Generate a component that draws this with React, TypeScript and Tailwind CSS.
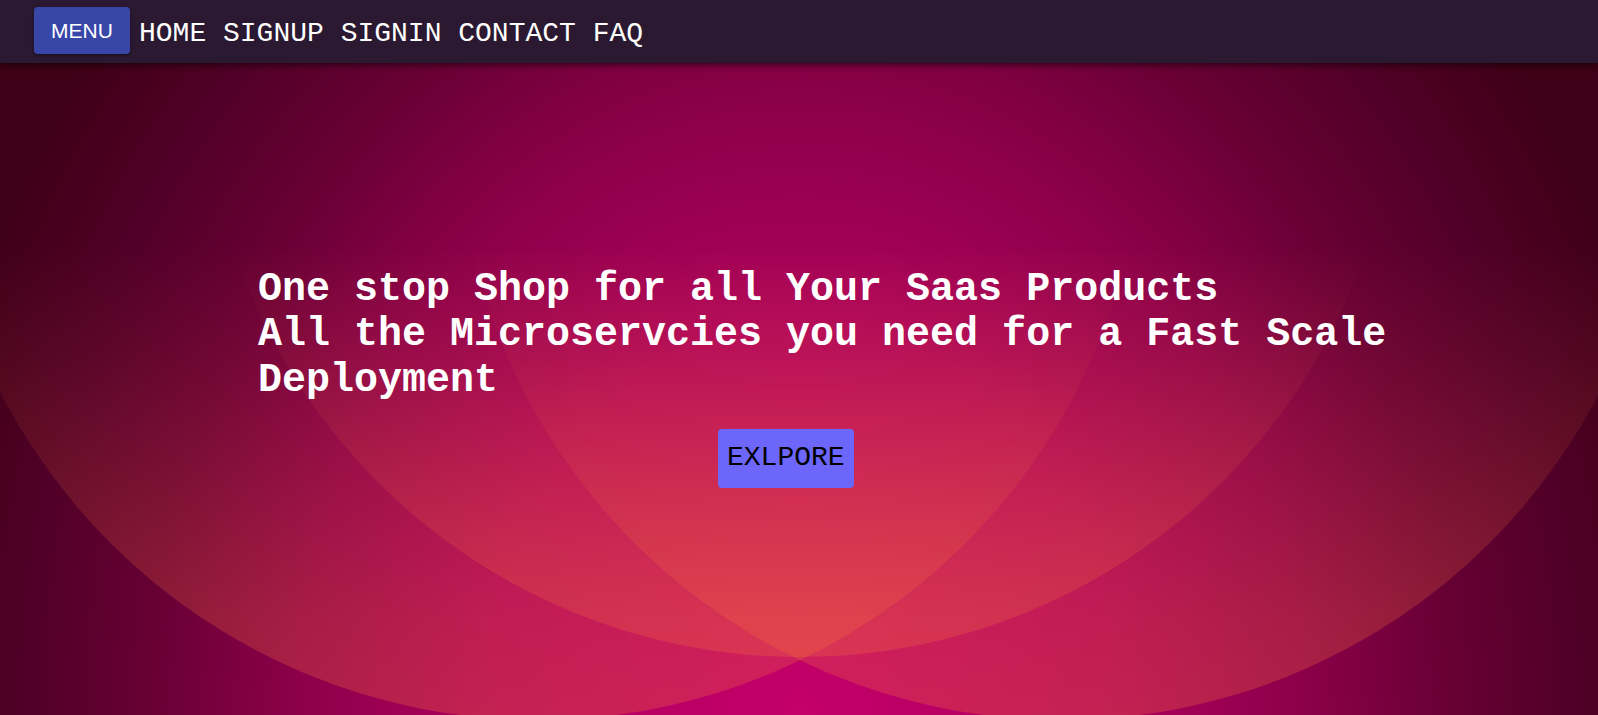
const links = ["HOME", "SIGNUP", "SIGNIN", "CONTACT", "FAQ"];

function HeroBackground() {
  return (
    <svg
      className="absolute inset-0 h-full w-full"
      viewBox="0 63 1598 652"
      preserveAspectRatio="none"
    >
      <defs>
        <radialGradient
          id="base"
          gradientUnits="userSpaceOnUse"
          cx="800"
          cy="715"
          r="900"
          gradientTransform="translate(800 715) scale(1 1.22) translate(-800 -715)"
        >
          <stop offset="0" stopColor="#c4006a" />
          <stop offset="0.35" stopColor="#ae005c" />
          <stop offset="0.56" stopColor="#8c0049" />
          <stop offset="0.72" stopColor="#680034" />
          <stop offset="0.85" stopColor="#520028" />
          <stop offset="1" stopColor="#3e0016" />
        </radialGradient>
        <linearGradient id="glow" gradientUnits="userSpaceOnUse" x1="0" y1="63" x2="0" y2="715">
          <stop offset="0" stopColor="#f56e3c" stopOpacity="0" />
          <stop offset="0.28" stopColor="#f56e3c" stopOpacity="0" />
          <stop offset="0.45" stopColor="#f56e3c" stopOpacity="0.06" />
          <stop offset="0.6" stopColor="#f56e3c" stopOpacity="0.13" />
          <stop offset="0.85" stopColor="#f56e3c" stopOpacity="0.26" />
          <stop offset="1" stopColor="#f56e3c" stopOpacity="0.3" />
        </linearGradient>
      </defs>
      <rect x="0" y="63" width="1598" height="652" fill="url(#base)" />
      <circle cx="800" cy="60" r="597" fill="url(#glow)" />
      <circle cx="538" cy="115" r="605" fill="url(#glow)" />
      <circle cx="1062" cy="115" r="605" fill="url(#glow)" />
    </svg>
  );
}

export default function App() {
  return (
    <div className="flex h-screen flex-col">
      <header className="relative z-10 flex h-[63px] shrink-0 items-center bg-[#2a1930] pl-[34px] shadow-[0_2px_4px_-1px_rgba(0,0,0,0.3),0_4px_5px_0_rgba(0,0,0,0.2),0_1px_10px_0_rgba(0,0,0,0.15)]">
        <button className="mb-[2px] h-[47px] w-[96px] rounded-[4px] bg-[#3846a8] font-['Liberation_Sans',sans-serif] text-[21px] text-white shadow-[0_3px_1px_-2px_rgba(0,0,0,0.2),0_2px_2px_0_rgba(0,0,0,0.14),0_1px_5px_0_rgba(0,0,0,0.12)]">
          MENU
        </button>
        <nav className="ml-[9px] mt-[4px] flex gap-[16.8px] font-['Courier_New','Liberation_Mono',monospace] text-[28px] leading-[31.7px] text-white">
          {links.map((l) => (
            <a key={l} href="#">
              {l}
            </a>
          ))}
        </nav>
      </header>
      <main className="relative flex-1 overflow-hidden">
        <HeroBackground />
        <div className="relative pl-[258px] pt-[204px]">
          <h1 className="w-[1200px] font-['Courier_New','Liberation_Mono',monospace] text-[40px] font-bold leading-[45.3px] text-white">
            One stop Shop for all Your Saas Products
            <br />
            All the Microservcies you need for a Fast Scale Deployment
          </h1>
          <div className="mt-[26px] flex pl-[460px]">
            <button className="rounded-[4px] bg-[#6c66fb] px-[9px] py-[13.5px] font-['Courier_New','Liberation_Mono',monospace] text-[28px] leading-[32px] text-black">
              EXLPORE
            </button>
          </div>
        </div>
      </main>
    </div>
  );
}
